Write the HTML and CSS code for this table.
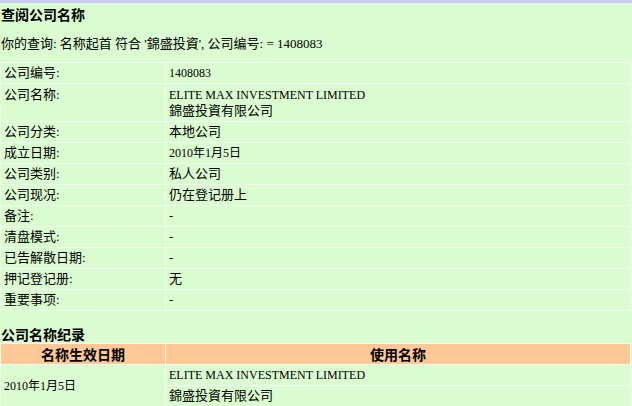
FILE: index.html
```html
<!DOCTYPE html>
<html lang="zh">
<head>
<meta charset="utf-8">
<link rel="stylesheet" href="styles.css">
</head>
<body>
<div class="topbar"></div>
<h1 class="title">查阅公司名称</h1>
<p class="query">你的查询: 名称起首 符合 '錦盛投資', 公司编号: = 1408083</p>
<table class="info">
  <tr><td class="k">公司编号:</td><td class="v"><span class="en">1408083</span></td></tr>
  <tr class="tall"><td class="k top">公司名称:</td><td class="v"><span class="en">ELITE MAX INVESTMENT LIMITED</span><br>錦盛投資有限公司</td></tr>
  <tr><td class="k">公司分类:</td><td class="v">本地公司</td></tr>
  <tr><td class="k">成立日期:</td><td class="v"><span class="en">2010年1月5日</span></td></tr>
  <tr><td class="k">公司类别:</td><td class="v">私人公司</td></tr>
  <tr><td class="k">公司现况:</td><td class="v">仍在登记册上</td></tr>
  <tr><td class="k">备注:</td><td class="v">-</td></tr>
  <tr><td class="k">清盘模式:</td><td class="v">-</td></tr>
  <tr><td class="k">已告解散日期:</td><td class="v">-</td></tr>
  <tr><td class="k">押记登记册:</td><td class="v">无</td></tr>
  <tr><td class="k">重要事项:</td><td class="v">-</td></tr>
</table>
<h2 class="subtitle">公司名称纪录</h2>
<table class="history">
  <tr><th class="c1">名称生效日期</th><th>使用名称</th></tr>
  <tr><td class="c1" rowspan="2"><span class="en">2010年1月5日</span></td><td><span class="en">ELITE MAX INVESTMENT LIMITED</span></td></tr>
  <tr><td>錦盛投資有限公司</td></tr>
</table>
</body>
</html>
```
FILE: styles.css
```css
html, body {
  margin: 0;
  padding: 0;
  background: #dbfcd0;
}
body {
  font-family: "Liberation Serif", "Noto Sans CJK SC", serif;
  font-size: 13px;
  color: #000;
  overflow: hidden;
}
.en {
  font-size: 12px;
}
.topbar {
  height: 3px;
  background: #c8ccf0;
}
.title {
  font-family: "Noto Sans CJK SC", sans-serif;
  font-size: 14px;
  font-weight: bold;
  margin: 3px 0 0 1px;
  line-height: 16px;
}
.query {
  margin: 14px 0 0 1px;
  line-height: 16px;
}
.info, .history {
  border-collapse: separate;
  border-spacing: 1px;
  width: 631px;
  background: #effdec;
}
.info {
  margin: 10px 0 0 0;
}
.info td, .history td, .history th {
  background: #dbfcd0;
  padding: 2px 3px;
  line-height: 16px;
  vertical-align: middle;
  text-align: left;
}
.info td {
  height: 16px;
}
.info .tall td {
  padding-top: 3px;
  padding-bottom: 2px;
  line-height: 16px;
}
.info td.k {
  width: 158px;
}
.info td.top {
  vertical-align: top;
}
.subtitle {
  font-family: "Noto Sans CJK SC", sans-serif;
  font-size: 14px;
  font-weight: bold;
  margin: 15px 0 0 1px;
  line-height: 16px;
}
.history {
  margin: 1px 0 0 0;
}
.history th {
  background: #ffc896;
  font-family: "Noto Sans CJK SC", sans-serif;
  font-size: 14px;
  font-weight: bold;
  text-align: center;
  height: 16px;
}
.history td {
  height: 15px;
}
.history .c1 {
  width: 158px;
}
```
